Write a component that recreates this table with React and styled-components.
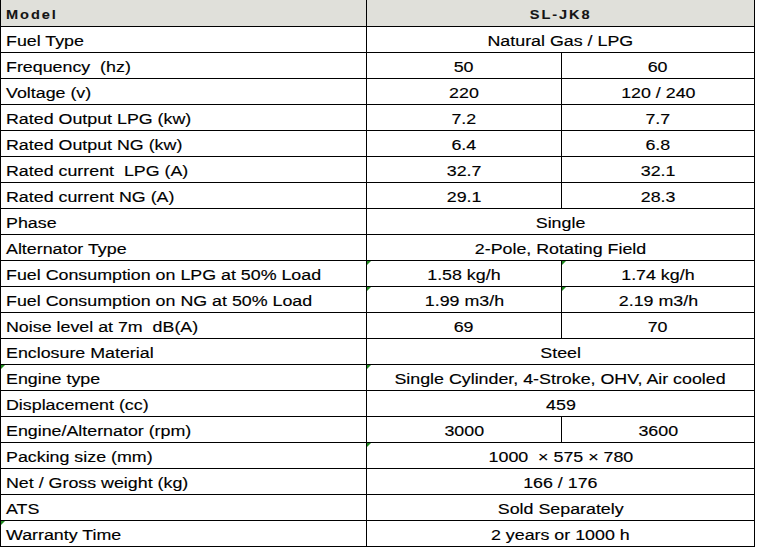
import styled, { createGlobalStyle } from 'styled-components';

const GlobalStyle = createGlobalStyle`
  body {
    margin: 0;
    background: #fff;
    font-family: "Liberation Sans", Arial, sans-serif;
  }
`;

const Sheet = styled.div`
  display: grid;
  grid-template-columns: 365px 194px 192px;
  grid-template-rows: 26px repeat(20, 25px);
  gap: 1px;
  width: max-content;
  padding: 0 1px 1px 1px;
  background: #000;
`;

const Cell = styled.div`
  position: relative;
  display: flex;
  align-items: center;
  justify-content: ${p => (p.$label ? 'flex-start' : 'center')};
  padding: 2px 0 0 ${p => (p.$label ? '5px' : '0')};
  grid-column: ${p => (p.$span ? 'span 2' : 'auto')};
  background: ${p => (p.$head ? '#e0e0da' : '#fff')};
  color: ${p => (p.$head ? '#141414' : '#000')};
  overflow: hidden;

  /* excel "number stored as text" marker */
  &::before {
    content: '';
    display: ${p => (p.$flag ? 'block' : 'none')};
    position: absolute;
    top: 0;
    left: 0;
    border-top: 4px solid #1f8a1f;
    border-right: 4px solid transparent;
  }
`;

const Text = styled.span`
  display: inline-block;
  white-space: pre;
  font-size: ${p => (p.$head ? '13.5px' : '15.5px')};
  font-weight: ${p => (p.$head ? 700 : 400)};
  letter-spacing: ${p => (p.$head ? '1.8px' : '0')};
  transform: scaleX(${p => (p.$head ? 1.08 : 1.15)});
  transform-origin: ${p => (p.$label ? 'left center' : 'center')};
  -webkit-text-stroke: ${p => (p.$head ? '0.1px' : '0.15px')};
`;

const rows = [
  { label: 'Fuel Type', values: ['Natural Gas / LPG'] },
  { label: 'Frequency  (hz)', values: ['50', '60'] },
  { label: 'Voltage (v)', values: ['220', '120 / 240'] },
  { label: 'Rated Output LPG (kw)', values: ['7.2', '7.7'] },
  { label: 'Rated Output NG (kw)', values: ['6.4', '6.8'] },
  { label: 'Rated current  LPG (A)', values: ['32.7', '32.1'] },
  { label: 'Rated current NG (A)', values: ['29.1', '28.3'] },
  { label: 'Phase', values: ['Single'] },
  { label: 'Alternator Type', values: ['2-Pole, Rotating Field'] },
  { label: 'Fuel Consumption on LPG at 50% Load', values: ['1.58 kg/h', '1.74 kg/h'], flags: [1, 2] },
  { label: 'Fuel Consumption on NG at 50% Load', values: ['1.99 m3/h', '2.19 m3/h'], flags: [1, 2] },
  { label: 'Noise level at 7m  dB(A)', values: ['69', '70'] },
  { label: 'Enclosure Material', values: ['Steel'] },
  { label: 'Engine type', values: ['Single Cylinder, 4-Stroke, OHV, Air cooled'], flags: [0, 1] },
  { label: 'Displacement (cc)', values: ['459'] },
  { label: 'Engine/Alternator (rpm)', values: ['3000', '3600'] },
  { label: 'Packing size (mm)', values: ['1000  × 575 × 780'], flags: [1] },
  { label: 'Net / Gross weight (kg)', values: ['166 / 176'] },
  { label: 'ATS', values: ['Sold Separately'] },
  { label: 'Warranty Time', values: ['2 years or 1000 h'], flags: [0] },
];

const App = () => {
  return (
    <>
      <GlobalStyle />
      <Sheet>
        <Cell $head $label>
          <Text $head $label>Model</Text>
        </Cell>
        <Cell $head $span>
          <Text $head>SL-JK8</Text>
        </Cell>

        {rows.map(row => {
          const flags = row.flags || [];
          const single = row.values.length === 1;
          return [
            <Cell key={row.label} $label $flag={flags.includes(0)}>
              <Text $label>{row.label}</Text>
            </Cell>,
            ...row.values.map((value, i) => (
              <Cell key={row.label + i} $span={single} $flag={flags.includes(i + 1)}>
                <Text>{value}</Text>
              </Cell>
            )),
          ];
        })}
      </Sheet>
    </>
  );
};

export default App;
